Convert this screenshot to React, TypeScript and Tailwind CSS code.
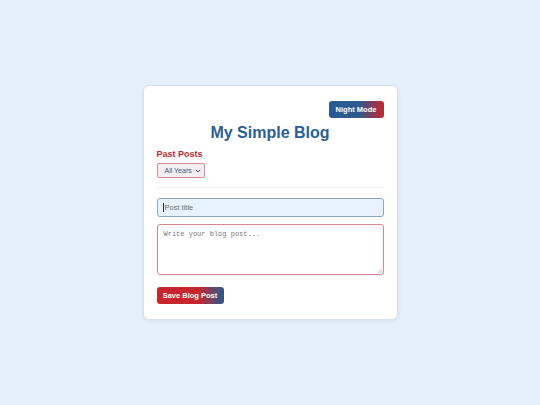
import React from "react";

export default function App() {
  return (
    <div className="min-h-screen w-full bg-[#e6f0fa] flex items-center justify-center" style={{ fontFamily: '"Liberation Sans", Arial, sans-serif' }}>
      <div className="w-[255px] bg-white rounded-[6px] border border-[#d6e2ee] shadow-[0_1px_4px_rgba(0,0,0,0.08)] px-[13px] pt-[15px] pb-[15px] flex flex-col">
        <div className="flex justify-end">
          <button className="h-[17px] w-[55px] rounded-[3px] text-white text-[7.5px] font-bold leading-none flex items-center justify-center bg-[linear-gradient(to_right,#2c5a8e_0%,#2c5a8e_55%,#c8262e_100%)]">
            Night Mode
          </button>
        </div>
        <h1 className="text-center text-[16px] font-bold text-[#2c5f94] mt-[4px] leading-[22px]">My Simple Blog</h1>
        <div className="mt-[4px] text-[9px] font-bold text-[#c0272d] leading-[12px]">Past Posts</div>
        <div className="mt-[3px] flex">
          <div className="w-[48px] h-[15px] border border-[#d98a8f] rounded-[2px] bg-[#f3eef2] flex items-center justify-between pl-[7px] pr-[3px] text-[7px] text-[#3a5a80] leading-none">
            <span>All Years</span>
            <svg width="6" height="4" viewBox="0 0 6 4"><path d="M0.8 0.8 L3 3 L5.2 0.8" fill="none" stroke="#3a5a80" strokeWidth="1" /></svg>
          </div>
        </div>
        <div className="mt-[9px] h-px bg-[#eef0f3]" />
        <div className="mt-[10px] h-[19px] border border-[#8aa6c1] rounded-[3px] bg-[#e8f2fc] flex items-center px-[5px] text-[7.5px] text-[#666d74] leading-none">
          <span className="w-px h-[9px] bg-[#333] mr-[1px]" />
          <span>Post title</span>
        </div>
        <div className="mt-[7px] h-[51px] border border-[#d3898e] rounded-[3px] bg-white px-[6px] pt-[5px] text-[7px] leading-[9px] text-[#7a7a7a] relative" style={{ fontFamily: '"Liberation Mono", "DejaVu Sans Mono", monospace' }}>
          Write your blog post...
          <svg className="absolute right-[1px] bottom-[1px]" width="4" height="4" viewBox="0 0 4 4"><path d="M4 0 L0 4 M4 2 L2 4" stroke="#999" strokeWidth="0.6" /></svg>
        </div>
        <div className="mt-[12px] flex">
          <button className="h-[17px] w-[67px] rounded-[3px] text-white text-[7.5px] font-bold leading-none flex items-center justify-center bg-[linear-gradient(to_right,#c8262e_0%,#c8262e_62%,#2c5a8e_100%)]">
            Save Blog Post
          </button>
        </div>
      </div>
    </div>
  );
}
